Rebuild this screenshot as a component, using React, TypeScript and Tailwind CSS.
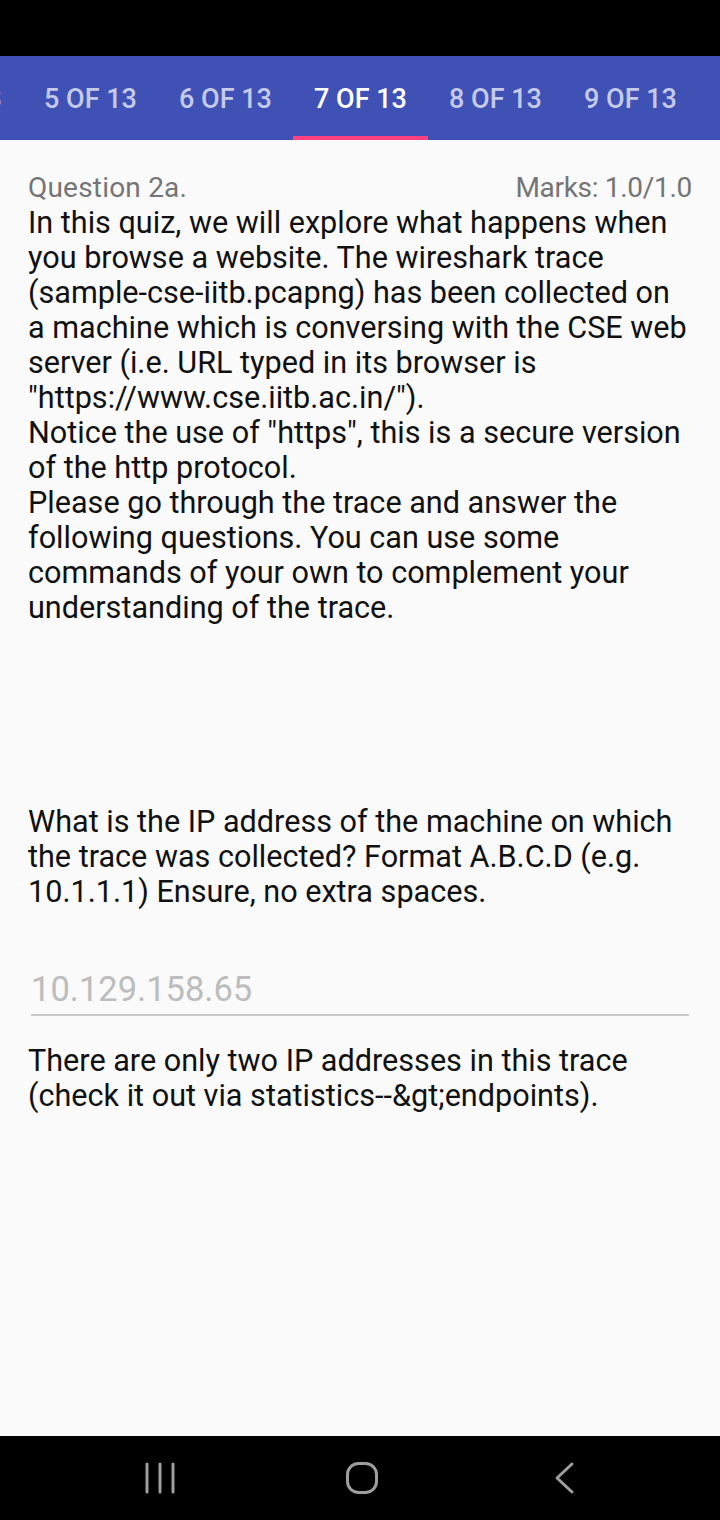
const tabs = ["4 OF 13", "5 OF 13", "6 OF 13", "7 OF 13", "8 OF 13", "9 OF 13"];

const App: React.FC = () => {
    return (
        <div className="w-[720px] h-[1520px] flex flex-col bg-[#fafafa] overflow-hidden" style={{ fontFamily: "Roboto, 'Noto Sans', sans-serif" }}>
            {/* status bar */}
            <div className="h-[56px] bg-black shrink-0"></div>

            {/* tab strip */}
            <div className="h-[84px] bg-[#3f51b5] shrink-0 overflow-hidden">
                <div className="flex h-full -ml-[112px]">
                    {tabs.map((t) => {
                        const active = t === "7 OF 13";
                        return (
                            <div key={t} className="w-[135px] shrink-0 h-full flex flex-col">
                                <div className={`flex-1 flex items-center justify-center text-[27px] font-medium pt-[6px] ${active ? "text-white" : "text-[#c5cae9]"}`}>
                                    {t}
                                </div>
                                <div className={`h-[4px] ${active ? "bg-[#ff4081]" : ""}`}></div>
                            </div>
                        );
                    })}
                </div>
            </div>

            {/* content */}
            <div className="flex-1 px-[28px] pt-[30px]">
                <div className="flex justify-between text-[28px] leading-[35px] text-[#757575]">
                    <span className="tracking-[0.2px]">Question 2a.</span>
                    <span className="tracking-[-0.3px]">Marks: 1.0/1.0</span>
                </div>
                <div className="text-[30.6px] leading-[35px] text-[#111]">
                    In this quiz, we will explore what happens when you browse a website. The wireshark trace (sample-cse-iitb.pcapng) has been collected on a machine which is conversing with the CSE web server (i.e. URL typed in its browser is "https://www.cse.iitb.ac.in/").
                    <br />
                    Notice the use of "https", this is a secure version of the http protocol.
                    <br />
                    Please go through the trace and answer the following questions. You can use some commands of your own to complement your understanding of the trace.
                </div>

                <div className="mt-[179px] text-[30.6px] leading-[35px] text-[#111]">
                    What is the IP address of the machine on which the trace was collected? Format A.B.C.D (e.g. 10.1.1.1) Ensure, no extra spaces.
                </div>

                <div className="mt-[60px] mx-[3px] border-b-2 border-[#c8c8c8] pb-[5px]">
                    <div className="text-[34.5px] leading-[40px] text-[#bdbdbd]">10.129.158.65</div>
                </div>

                <div className="mt-[27px] text-[30.6px] leading-[35px] text-[#111]">
                    There are only two IP addresses in this trace (check it out via statistics--&amp;gt;endpoints).
                </div>
            </div>

            {/* nav bar */}
            <div className="h-[84px] bg-black shrink-0 flex items-center pl-[140px] gap-[162px]">
                <svg width="40" height="40" viewBox="0 0 40 40">
                    <g stroke="#9e9e9e" strokeWidth="3" strokeLinecap="round">
                        <line x1="7" y1="6" x2="7" y2="34" />
                        <line x1="20" y1="6" x2="20" y2="34" />
                        <line x1="33" y1="6" x2="33" y2="34" />
                    </g>
                </svg>
                <svg width="40" height="40" viewBox="0 0 40 40">
                    <rect x="5.5" y="5.5" width="29" height="29" rx="11" fill="none" stroke="#9e9e9e" strokeWidth="3" />
                </svg>
                <svg width="40" height="40" viewBox="0 0 40 40">
                    <polyline points="28,6 13,20 28,34" fill="none" stroke="#9e9e9e" strokeWidth="3" strokeLinecap="round" strokeLinejoin="round" />
                </svg>
            </div>
        </div>
    );
};

export default App;
